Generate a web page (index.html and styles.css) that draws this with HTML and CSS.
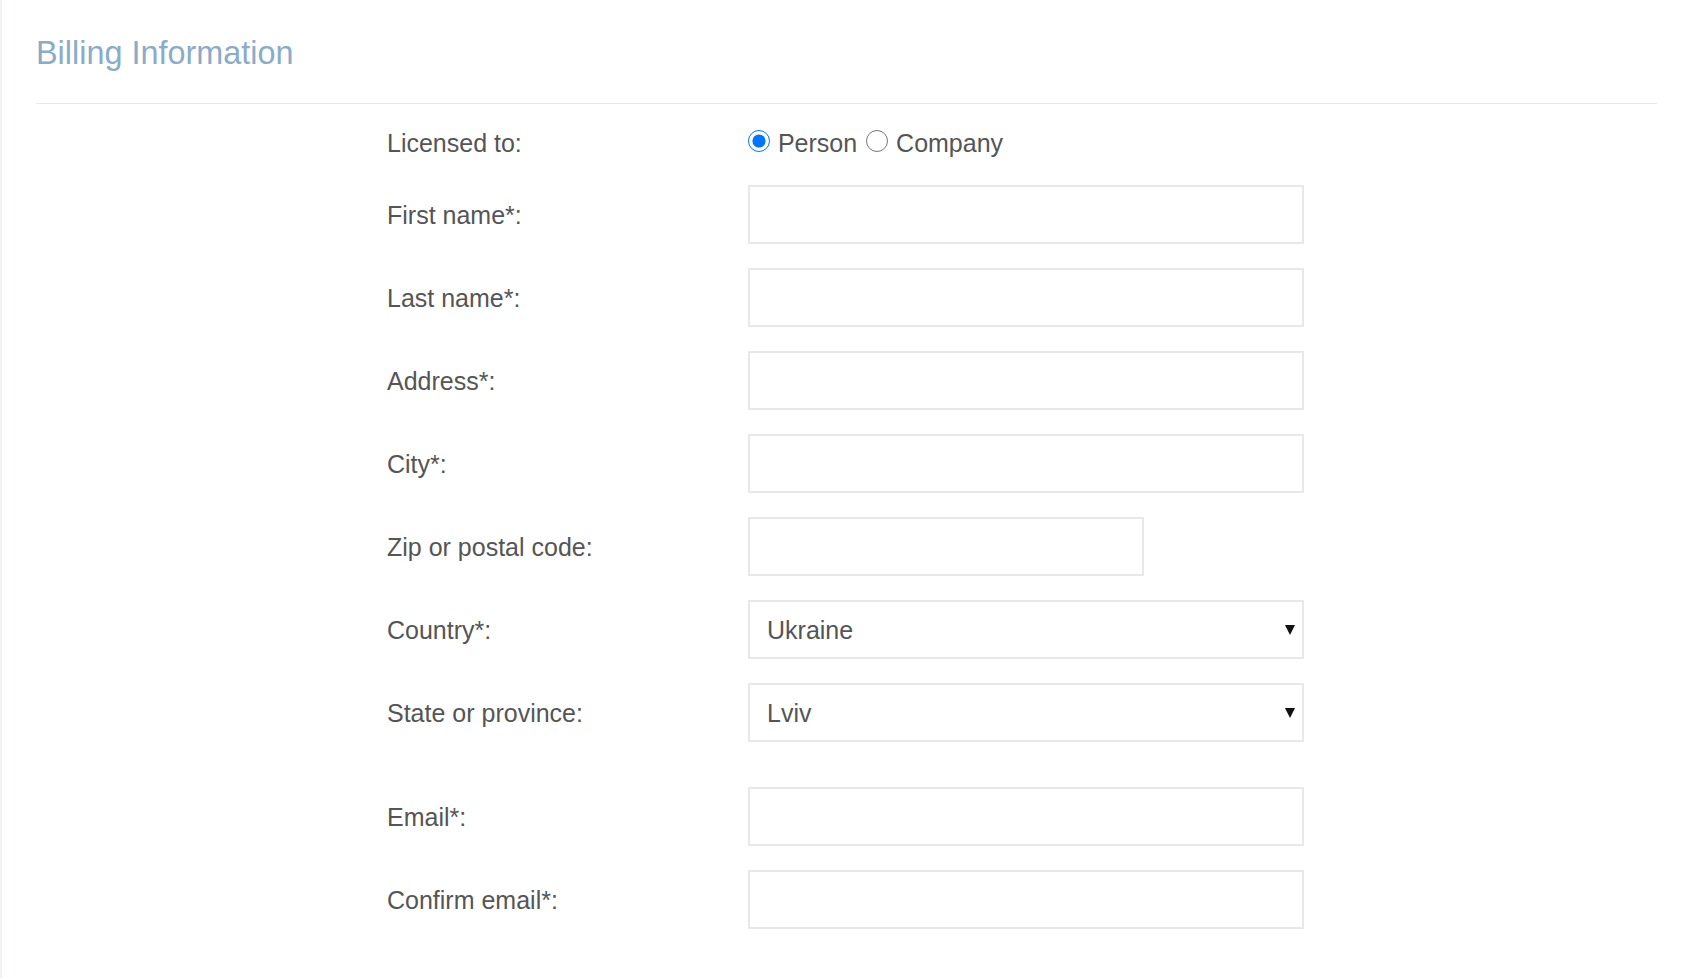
FILE: index.html
```html
<!DOCTYPE html>
<html lang="en">
<head>
<meta charset="utf-8">
<title>Billing Information</title>
<link rel="stylesheet" href="styles.css">
</head>
<body>
<div class="page">
  <h2 class="section-title">Billing Information</h2>
  <form class="billing-form">
    <div class="row row-radio">
      <span class="label">Licensed to:</span>
      <div class="field radios">
        <label class="radio-opt"><input type="radio" name="lic" checked> Person</label>
        <label class="radio-opt"><input type="radio" name="lic"> Company</label>
      </div>
    </div>
    <div class="row">
      <label class="label" for="fn">First name*:</label>
      <input class="text-input" id="fn" type="text">
    </div>
    <div class="row">
      <label class="label" for="ln">Last name*:</label>
      <input class="text-input" id="ln" type="text">
    </div>
    <div class="row">
      <label class="label" for="addr">Address*:</label>
      <input class="text-input" id="addr" type="text">
    </div>
    <div class="row">
      <label class="label" for="city">City*:</label>
      <input class="text-input" id="city" type="text">
    </div>
    <div class="row">
      <label class="label" for="zip">Zip or postal code:</label>
      <input class="text-input short" id="zip" type="text">
    </div>
    <div class="row">
      <label class="label" for="country">Country*:</label>
      <div class="select-wrap">
        <select class="select" id="country"><option>Ukraine</option></select>
      </div>
    </div>
    <div class="row">
      <label class="label" for="state">State or province:</label>
      <div class="select-wrap">
        <select class="select" id="state"><option>Lviv</option></select>
      </div>
    </div>
    <div class="row row-spaced">
      <label class="label" for="email">Email*:</label>
      <input class="text-input" id="email" type="text">
    </div>
    <div class="row">
      <label class="label" for="email2">Confirm email*:</label>
      <input class="text-input" id="email2" type="text">
    </div>
  </form>
</div>
</body>
</html>
```
FILE: styles.css
```css
html, body {
  margin: 0;
  padding: 0;
  background: #ffffff;
}

body {
  font-family: "Liberation Sans", Arial, sans-serif;
  color: #555555;
}

.page {
  border-left: 2px solid #f0f2f8;
  min-height: 978px;
  box-sizing: border-box;
  padding: 0 31px 0 34px;
}

.section-title {
  margin: 0;
  padding: 37px 0 34px 0;
  font-size: 32.4px;
  line-height: 32px;
  font-weight: normal;
  color: #8aacc8;
  border-bottom: 1px solid #e8e8e8;
}

.billing-form {
  display: flex;
  flex-direction: column;
  gap: 24px;
  padding: 21px 0 0 351px;
}

.row {
  display: flex;
  align-items: center;
}

.row-radio {
  height: 36px;
}

.row-spaced {
  margin-top: 21px;
}

.label {
  width: 361px;
  flex: none;
  font-size: 25px;
  line-height: 30px;
  color: #555555;
}

.radios {
  font-size: 25px;
  line-height: 30px;
  color: #555555;
}

.radio-opt input {
  width: 22px;
  height: 22px;
  margin: 0 1px 0 0;
  accent-color: #0075ff;
}

.radio-opt + .radio-opt input {
  margin-left: 2px;
}

.text-input,
.select {
  box-sizing: border-box;
  width: 556px;
  height: 59px;
  border: 2px solid #e8e8e8;
  border-radius: 0;
  background: #ffffff;
  font-family: "Liberation Sans", Arial, sans-serif;
  font-size: 25px;
  color: #555555;
  padding: 0 17px;
  margin: 0;
  outline: none;
}

.text-input.short {
  width: 396px;
}

.select-wrap {
  position: relative;
  width: 556px;
}

.select {
  appearance: none;
  -webkit-appearance: none;
  display: block;
}

.select-wrap::after {
  content: "";
  position: absolute;
  right: 9px;
  top: 50%;
  margin-top: -5px;
  width: 0;
  height: 0;
  border-left: 5.5px solid transparent;
  border-right: 5.5px solid transparent;
  border-top: 10px solid #111111;
  pointer-events: none;
}
```
